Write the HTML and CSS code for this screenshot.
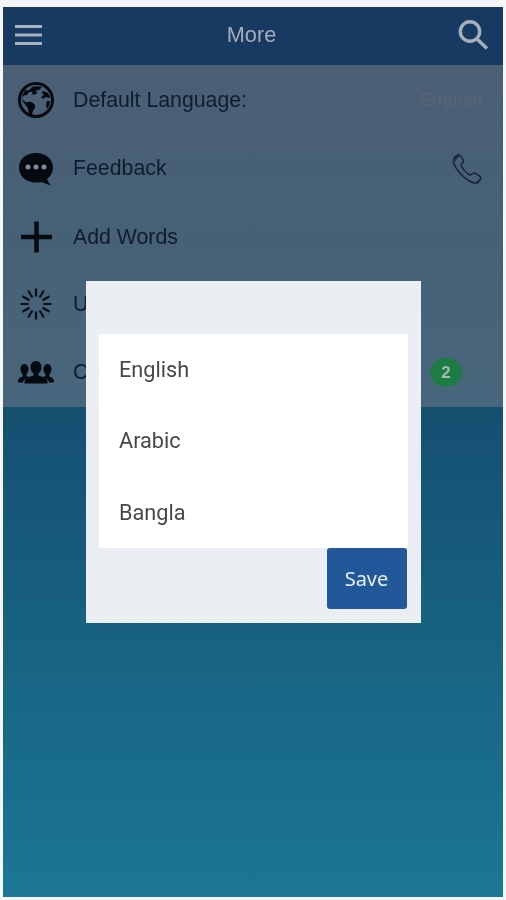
FILE: index.html
```html
<!DOCTYPE html>
<html lang="en">
<head>
<meta charset="utf-8">
<title>More</title>
<link rel="stylesheet" href="styles.css">
</head>
<body>
<div class="app">
  <header class="topbar">
    <svg class="menu-icon" viewBox="0 0 28 22"><path d="M0 2.500h27M0 11h27M0 19.500h27"/></svg>
    <h1 class="title">More</h1>
    <svg class="search-icon" viewBox="0 0 32 32"><circle cx="13" cy="12.500" r="9.700"/><path d="M20 20l10 9.500"/></svg>
  </header>
  <ul class="list">
    <li class="row">
      <svg class="icon" viewBox="0 0 38 38"><circle cx="19" cy="19" r="16.500" class="ring"/><path class="fill" d="M8 9c3 1 5 0 7-3 3-1 7-1 10 0l-3 3-3 .5 1 3-4 1.500-1-3-3 0-2 3-3 .5c-2 1-2 3-1 4.500l3 2.500c2-1 5-1 7 .5l2 2v3l-2 3-1.500 5-2.500-1.500-1-6-2-3c-2-2-4-5-4-8 .5-2 1-4 2.500-6z"/><path class="fill" d="M26 10l5 2 2 4-1 1-3-1-3 2-2-2 3-2-2-2z"/><path class="fill" d="M30 20l3 0-1 5-2 3-1-5z"/></svg>
      <span class="label">Default Language:</span>
      <span class="value">English</span>
    </li>
    <li class="row">
      <svg class="icon" viewBox="0 0 38 38"><path class="fill" d="M19 3c9.500 0 17 6 17 14.500 0 5-2.500 9-6 11.500l3.500 6.500-9-3.500c-2 .5-3.500.5-5.500.5-9.500 0-17-6-17-15S9.500 3 19 3z"/><circle cx="11" cy="17" r="2.500" class="dot"/><circle cx="19" cy="17" r="2.500" class="dot"/><circle cx="27" cy="17" r="2.500" class="dot"/></svg>
      <span class="label">Feedback</span>
      <svg class="phone-icon" viewBox="0 0 32 32"><path d="M3 5.500C4.500 3 7 1.500 9 2.500c1.500 1 3 3.500 3.500 5.500.3 1.500-2 2.500-2.500 4 1 3 5 8 9 10 1.500-.5 3-2.500 4.500-2 2 .7 5 2.500 6 4 .7 1.500-.5 4-3 5.500-2 1-5 .5-9-2C12 24 5 16.500 3 11c-.7-2-.8-3.800 0-5.500z"/><path d="M8 2.800c-2 1-3.500 3-4 5M30 25c-1 2-3 4-5 5"/></svg>
    </li>
    <li class="row">
      <svg class="icon" viewBox="0 0 38 38"><path class="plus" d="M19.500 3.500v31M4 19h31"/></svg>
      <span class="label">Add Words</span>
    </li>
    <li class="row">
      <svg class="icon" viewBox="0 0 38 38"><path class="spokes" d="M26.500 19h8M25.500 22.750l7 4M22.750 25.500l4 7M19 26.500v8M15.250 25.500l-4 7M12.500 22.750l-7 4M11.500 19h-8M12.500 15.250l-7-4M15.250 12.500l-4-7M19 11.500v-8M22.750 12.500l4-7M25.500 15.250l7-4"/></svg>
      <span class="label">Update</span>
    </li>
    <li class="row">
      <svg class="icon" viewBox="0 0 38 38"><path class="fill" d="M19 7c3.500 0 5.500 3 5.500 6 0 3-1 5-3 6.500v2c3.500 1 8.500 2.500 9 6v2H7.500v-2c.5-3.500 5.500-5 9-6v-2c-2-1.500-3-3.500-3-6.500 0-3 2-6 5.500-6z"/><path class="fill" d="M7.500 10c2.500 0 4 2.500 4 5 0 2-.7 4-2 5v2c.8.300 1.500.5 2.700 1-3 1.300-6 3-6.400 5.500H1v-2c.3-2.500 3.500-3.500 4.500-4v-2.500c-1.200-1-2-3-2-5 0-2.500 1.500-5 4-5z"/><path class="fill" d="M30.500 10c-2.500 0-4 2.500-4 5 0 2 .7 4 2 5v2c-.8.300-1.500.5-2.700 1 3 1.300 6 3 6.400 5.500H37v-2c-.3-2.500-3.500-3.500-4.500-4v-2.500c1.200-1 2-3 2-5 0-2.500-1.500-5-4-5z"/></svg>
      <span class="label">Contacts</span>
      <span class="badge">2</span>
    </li>
  </ul>
  <div class="modal">
    <ul class="options">
      <li class="option">English</li>
      <li class="option">Arabic</li>
      <li class="option">Bangla</li>
    </ul>
    <div class="actions">
      <button class="save" type="button">Save</button>
    </div>
  </div>
</div>
</body>
</html>
```
FILE: styles.css
```css
* { box-sizing: border-box; }
html, body { height: 100%; }
body {
  margin: 0;
  padding: 7px 3px 3px 3px;
  background: #f4f6f7;
  font-family: "Liberation Sans", Arial, sans-serif;
  overflow: hidden;
}
.app {
  position: relative;
  height: 890px;
  display: flex;
  flex-direction: column;
  background: linear-gradient(#154f70 0, #154f70 400px, #1b7795 100%);
  filter: blur(0.5px);
}
.topbar {
  flex: 0 0 58px;
  display: flex;
  align-items: center;
  justify-content: space-between;
  padding: 0 14px 3px 12px;
  background: #183a62;
}
.title {
  margin: 0 0 0 3px;
  font-size: 21.700px;
  font-weight: 400;
  color: #a3aeb9;
}
.menu-icon { width: 28px; height: 22px; fill: none; stroke: #a8b2bc; stroke-width: 3; }
.search-icon { width: 32px; height: 32px; fill: none; stroke: #a7b0b8; stroke-width: 3.400; }
.list {
  flex: 0 0 342px;
  margin: 0;
  padding: 0;
  list-style: none;
  display: flex;
  flex-direction: column;
  background: linear-gradient(#4b5f75, #466176 50%, #48667d);
}
.row {
  flex: 0 0 68.400px;
  display: flex;
  align-items: center;
  padding: 0 20px 0 14px;
  gap: 18px;
}
.row:nth-child(1) { padding-top: 2px; }
.row:nth-child(2) { padding-top: 2px; }
.row:nth-child(3) { padding-top: 3px; }
.icon { flex: none; width: 38px; height: 38px; }
.ring { fill: none; stroke: #050a10; stroke-width: 3; }
.fill { fill: #050a10; }
.dot { fill: #7f8e9c; }
.plus { fill: none; stroke: #050a10; stroke-width: 4.500; }
.spokes { fill: none; stroke: #0a0f15; stroke-width: 2.200; }
.label { flex: 1; font-size: 21.300px; color: #0f1c2c; }
.value { font-size: 17.500px; font-weight: 700; color: #566472; }
.phone-icon { width: 32px; height: 32px; fill: none; stroke: #12263b; stroke-width: 1.500; }
.badge {
  width: 32px;
  height: 29px;
  margin-right: 21px;
  border-radius: 50%;
  display: flex;
  align-items: center;
  justify-content: center;
  background: #1c7c43;
  color: #a3bfae;
  font-size: 17px;
  font-weight: 700;
}
.modal {
  position: absolute;
  left: 83px;
  top: 274px;
  width: 334.500px;
  height: 342px;
  padding: 53px 13px 0 13px;
  background: rgba(238, 241, 244, 0.985);
}
.options {
  margin: 0;
  padding: 0;
  list-style: none;
  background: #fff;
  height: 214px;
}
.option {
  height: 71.300px;
  display: flex;
  align-items: center;
  padding-left: 20px;
  font-family: Roboto, sans-serif;
  font-size: 21.700px;
  color: #484848;
}
.actions { display: flex; justify-content: flex-end; padding-right: 1px; }
.save {
  width: 80px;
  height: 61px;
  border: 0;
  border-radius: 3px;
  background: #22589a;
  color: #e6edf4;
  font-family: "Noto Sans", sans-serif;
  font-size: 20px;
}
```
